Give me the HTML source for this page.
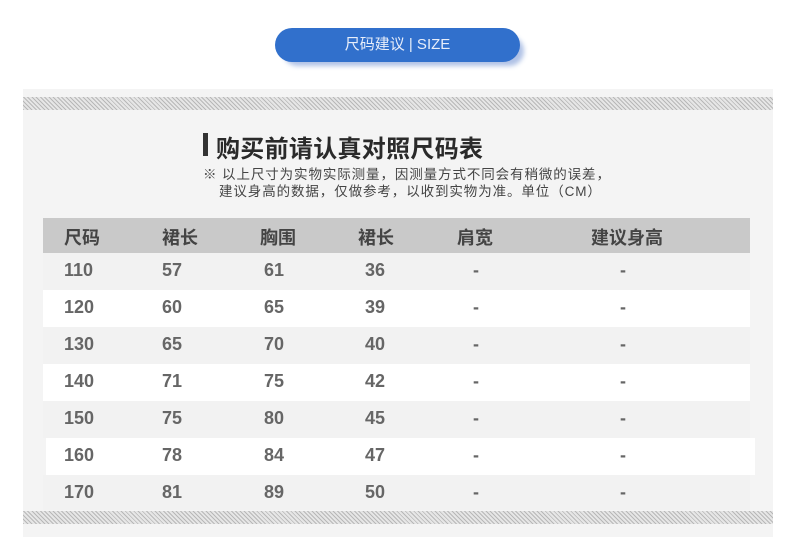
<!DOCTYPE html><html><head><meta charset="utf-8"><style>
body{margin:0;width:790px;height:542px;background:#fff;position:relative;overflow:hidden;font-family:"Liberation Sans","Noto Sans CJK SC",sans-serif}
.btn{position:absolute;left:275px;top:28px;width:245px;height:34px;border-radius:17px;background:#3170cc;color:#e8eefa;font-size:15px;line-height:34px;text-align:center;box-shadow:6px 6px 5px -2px rgba(80,120,200,.45)}
.panel{position:absolute;left:23px;top:89px;width:750px;height:448px;background:#f4f4f4}
.stripe{position:absolute;left:23px;width:750px;height:13px;background:repeating-linear-gradient(45deg,#b8b8b8 0 1px,#e6e6e6 1px 3px)}
.title{position:absolute;left:216px;top:129px;font-size:24px;letter-spacing:0.3px;font-weight:bold;color:#2a2a2a}
.bar{position:absolute;left:203px;top:133px;width:5px;height:23px;background:#333}
.note{position:absolute;left:203px;font-size:13.5px;color:#444;white-space:nowrap;letter-spacing:0.9px}
.row{position:absolute;left:43px;width:707px;height:37px;font-size:18px;font-weight:bold;color:#666}
.row span{position:absolute;top:7px}
.hd{background:#c9c9c9;color:#444}
</style></head><body>
<div class="btn">尺码建议 | SIZE</div>
<div class="panel"></div>
<div class="stripe" style="top:97px"></div>
<div class="stripe" style="top:511px"></div>
<div class="bar"></div>
<div class="title">购买前请认真对照尺码表</div>
<div class="note" style="top:163px">※ 以上尺寸为实物实际测量，因测量方式不同会有稍微的误差，</div>
<div class="note" style="top:180px;left:219px">建议身高的数据，仅做参考，以收到实物为准。单位（CM）</div>
<div class="row hd" style="top:218px;height:35px"><span style="left:21px;top:6px">尺码</span><span style="left:119px;top:6px">裙长</span><span style="left:217px;top:6px">胸围</span><span style="left:315px;top:6px">裙长</span><span style="left:414px;top:6px">肩宽</span><span style="left:548px;top:6px">建议身高</span></div>
<div class="row" style="top:253px;background:#f2f2f2"><span style="left:21px">110</span><span style="left:119px">57</span><span style="left:221px">61</span><span style="left:322px">36</span><span style="left:430px">-</span><span style="left:577px">-</span></div>
<div class="row" style="top:290px;background:#fff"><span style="left:21px">120</span><span style="left:119px">60</span><span style="left:221px">65</span><span style="left:322px">39</span><span style="left:430px">-</span><span style="left:577px">-</span></div>
<div class="row" style="top:327px;background:#f2f2f2"><span style="left:21px">130</span><span style="left:119px">65</span><span style="left:221px">70</span><span style="left:322px">40</span><span style="left:430px">-</span><span style="left:577px">-</span></div>
<div class="row" style="top:364px;background:#fff"><span style="left:21px">140</span><span style="left:119px">71</span><span style="left:221px">75</span><span style="left:322px">42</span><span style="left:430px">-</span><span style="left:577px">-</span></div>
<div class="row" style="top:401px;background:#f2f2f2"><span style="left:21px">150</span><span style="left:119px">75</span><span style="left:221px">80</span><span style="left:322px">45</span><span style="left:430px">-</span><span style="left:577px">-</span></div>
<div class="row" style="top:438px;background:#fff;left:46px;width:709px"><span style="left:18px">160</span><span style="left:116px">78</span><span style="left:218px">84</span><span style="left:319px">47</span><span style="left:427px">-</span><span style="left:574px">-</span></div>
<div class="row" style="top:475px;background:#f2f2f2;height:35px"><span style="left:21px">170</span><span style="left:119px">81</span><span style="left:221px">89</span><span style="left:322px">50</span><span style="left:430px">-</span><span style="left:577px">-</span></div>
</body></html>
